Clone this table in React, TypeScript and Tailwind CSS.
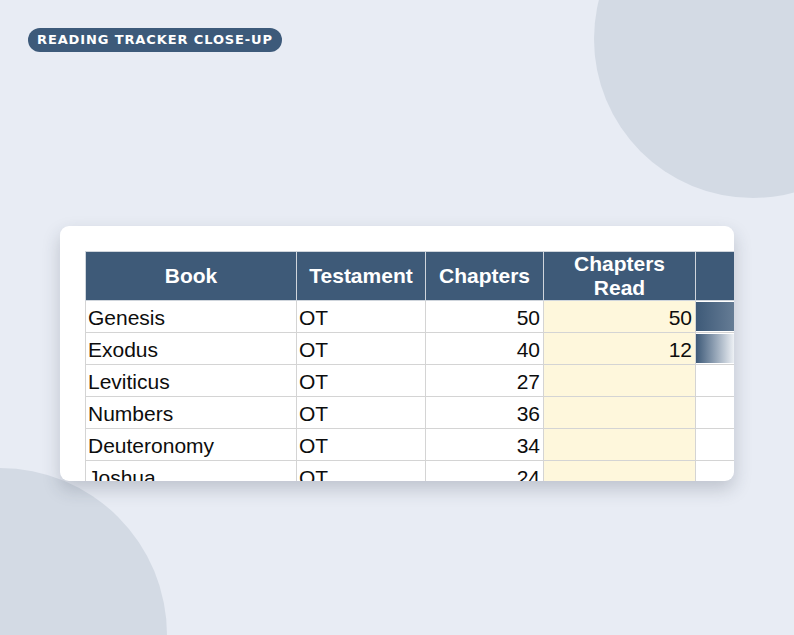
const rows = [
  { book: "Genesis", t: "OT", ch: 50, read: 50 },
  { book: "Exodus", t: "OT", ch: 40, read: 12 },
  { book: "Leviticus", t: "OT", ch: 27, read: null },
  { book: "Numbers", t: "OT", ch: 36, read: null },
  { book: "Deuteronomy", t: "OT", ch: 34, read: null },
  { book: "Joshua", t: "OT", ch: 24, read: null },
]

const cell = "border border-[#d4d4d4] h-[32px] pl-[2px] pr-[3px] pt-[2px] align-middle leading-none"

export default function App() {
  return (
    <div className="relative h-[635px] w-[794px] overflow-hidden bg-[#e8ecf4]">
      {/* background blobs */}
      <div className="absolute -right-[118px] -top-[120px] h-[318px] w-[318px] rounded-full bg-[#d3dae4]" />
      <div className="absolute -bottom-[167px] -left-[167px] h-[334px] w-[334px] rounded-full bg-[#d3dae4]" />

      <div className="relative flex flex-col items-start pl-[28px] pt-[28px]">
        <span
          className="h-[24px] rounded-full bg-[#3d5a7a] px-[9px] text-[13px] leading-[24px] font-bold tracking-[0.068em] text-white uppercase"
          style={{ fontFamily: '"DejaVu Sans", sans-serif' }}
        >
          Reading Tracker Close-up
        </span>

        <div className="mt-[174px] ml-[32px] h-[255px] w-[674px] overflow-hidden rounded-[9px] bg-white pl-[25px] pt-[25px] shadow-[0_8px_18px_rgba(40,50,70,0.22)]">
          <table
            className="w-[770px] max-w-none table-fixed border-collapse text-[21px] text-[#0d0d0d]"
            style={{ fontFamily: '"Liberation Sans", Arial, sans-serif' }}
          >
            <colgroup>
              <col className="w-[211px]" />
              <col className="w-[129px]" />
              <col className="w-[118px]" />
              <col className="w-[152px]" />
              <col className="w-[160px]" />
            </colgroup>
            <thead>
              <tr className="h-[49px] bg-[#3e5a78] text-white">
                <th className="border border-[#cfd5dc] font-bold">Book</th>
                <th className="border border-[#cfd5dc] font-bold">Testament</th>
                <th className="border border-[#cfd5dc] font-bold">Chapters</th>
                <th className="border border-[#cfd5dc] font-bold leading-[24px]">
                  Chapters
                  <br />
                  Read
                </th>
                <th className="border border-[#cfd5dc]" />
              </tr>
            </thead>
            <tbody>
              {rows.map((r) => (
                <tr key={r.book}>
                  <td className={`${cell} text-left`}>{r.book}</td>
                  <td className={`${cell} text-left`}>{r.t}</td>
                  <td className={`${cell} text-right`}>{r.ch}</td>
                  <td className={`${cell} bg-[#fef7dc] text-right`}>{r.read ?? ""}</td>
                  <td className="h-[32px] border border-[#d4d4d4] p-0 align-middle">
                    {r.read !== null && (
                      <div
                        className="h-[29px] bg-gradient-to-r from-[#3e5a78] to-[#eef1f5]"
                        style={{ width: `${(r.read / 50) * 100}%` }}
                      />
                    )}
                  </td>
                </tr>
              ))}
            </tbody>
          </table>
        </div>
      </div>
    </div>
  )
}
